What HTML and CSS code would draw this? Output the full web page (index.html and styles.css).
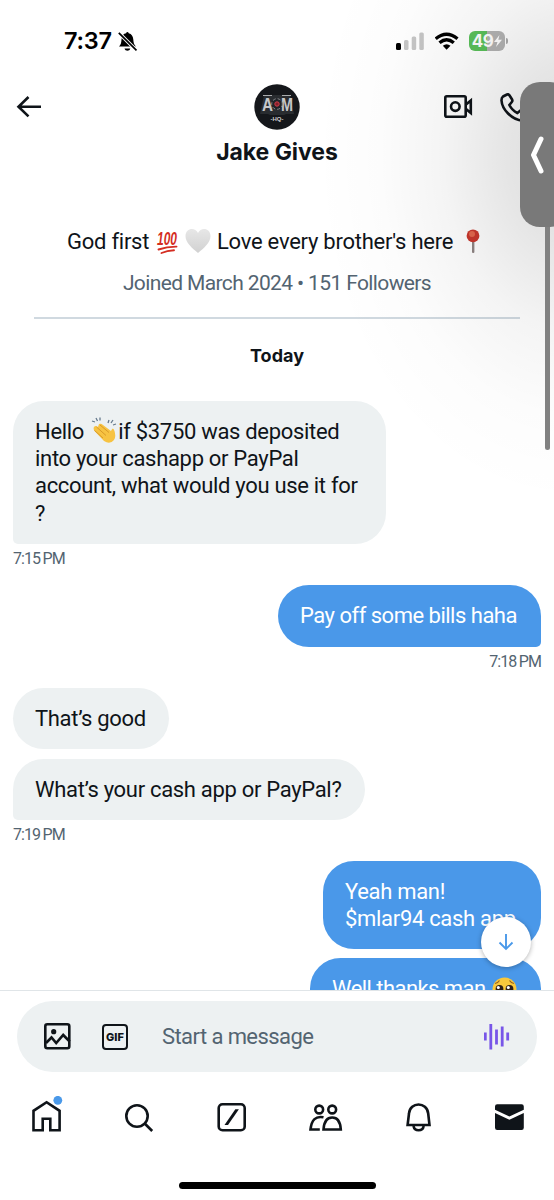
FILE: index.html
```html
<!DOCTYPE html>
<html lang="en">
<head>
<meta charset="utf-8">
<title>Jake Gives</title>
<link rel="stylesheet" href="styles.css">
</head>
<body>
<main class="phone">
  <div class="status">
    <span class="clock">7:37</span>
    <svg class="mute" width="20" height="20" viewBox="118 31 20 20"><path d="M119 46.500c2-2 2.300-4 2.500-7 .3-4 2-6 4.600-6.300.4-1.500 2.200-1.500 2.600 0 3 .6 4.300 3 4.600 6.300.2 3 .6 5 2.600 7z"/><path d="M124.500 48.500h5.800c-.8 3-5 3-5.800 0z"/><path d="M118.500 32.500 136.500 50.500" stroke="#fff" stroke-width="3.600"/><path d="M118.800 32.800 136.500 50.300" stroke="#000" stroke-width="1.700"/></svg>
    <div class="indicators">
      <svg width="29" height="19" viewBox="397 32 29 19"><rect x="397" y="43" width="5" height="7" rx="1.500"/><g fill="#c6c6c6"><rect x="405" y="40" width="4.500" height="10" rx="1.500"/><rect x="412.700" y="36.500" width="4.500" height="13.500" rx="1.500"/><rect x="420.300" y="32.500" width="4.500" height="17.500" rx="1.500"/></g></svg>
      <svg width="24" height="18" viewBox="436 32 24 18"><g fill="none" stroke="#000" stroke-width="3.300"><path d="M436.700 38.800q10.800-9.200 21.800 0"/><path d="M440.500 42.700q7.100-6 14.300 0"/></g><path d="M443.800 45.800q3.800-3 7.700 0l-3.900 3.900z"/></svg>
      <div class="battery"><span>49</span><svg width="8" height="12" viewBox="0 0 8 12"><path d="M5.500 0 0 7h3.500L2 12l6-7.200H4.300z" fill="#fff"/></svg></div>
    </div>
  </div>

  <header class="top">
    <svg class="back" width="26" height="24" viewBox="16 95 26 24"><path d="M28.500 97 18.500 106.700l10 9.700M18.500 106.700H41" fill="none" stroke="#0f1419" stroke-width="2.600"/></svg>
    <div class="identity">
      <svg class="avatar" width="46" height="46" viewBox="0 0 46 46"><circle cx="23" cy="23" r="22.700" fill="#15171b"/><path d="M6 30 10 11h26l4 19h-8l-2 1H16l-2-1z" fill="#292c30"/><text x="8" y="27" class="crest" textLength="11" lengthAdjust="spacingAndGlyphs">A</text><text x="27" y="27" class="crest" textLength="12" lengthAdjust="spacingAndGlyphs">M</text><path d="M9 11.500h9m10 0h9" stroke="#aaacae"/><circle cx="23" cy="20" r="5.300" fill="#202328" stroke="#85878a" stroke-dasharray="3 2"/><circle cx="23" cy="20" r="2.200" fill="#81202a" stroke="#d43c48"/><text x="23" y="37" class="crest-sub">-HQ-</text></svg>
      <h1 class="name">Jake Gives</h1>
    </div>
    <div class="calls">
      <svg width="30" height="24" viewBox="443 95 30 24"><g fill="none" stroke="#0f1419" stroke-width="2.600"><rect x="445.300" y="96.300" width="20.400" height="20.400" rx="1.500"/><circle cx="455.300" cy="106.600" r="4.300"/><path d="M466 104.500 470.800 100.500v12.500L466 109"/></g></svg>
      <svg width="30" height="30" viewBox="500 91 30 30"><path d="M503 94.500 507 92.500q1.500-.6 2.400.8l2.700 4.200q.7 1.300-.3 2.500l-2.400 3q2.500 5.200 8 8l3-2.500q1.200-.9 2.500-.1l4.200 2.700q1.300.9.500 2.400-2 5-5 5.200C511.500 118 502 107 501.500 98.500q-.1-2.800 1.500-4z" fill="none" stroke="#0f1419" stroke-width="2.600"/></svg>
    </div>
  </header>

  <section class="chat">
    <div class="bio">
      <span class="bio-a">God first</span>
      <svg class="hundred" width="24" height="28" viewBox="0 -2 24 28"><text x="1" y="15.500" class="hundred-text" textLength="20" lengthAdjust="spacingAndGlyphs">100</text><path d="M2.500 20.500Q11 17.500 20.500 17.600M5.500 24Q11 21.500 18 21.200" fill="none" stroke="#d42d22" stroke-width="1.900" stroke-linecap="round"/></svg>
      <svg class="heart" width="26" height="26" viewBox="0 0 26 26"><defs><linearGradient id="h" x2="0" y2="1"><stop stop-color="#e7e7e7"/><stop offset="1" stop-color="#d1d1d1"/></linearGradient></defs><path d="M13 25C7 20 .5 14.500.5 8c0-8 9.500-9.500 12.500-3C16-1.500 25.500 0 25.500 8c0 6.500-6.500 12-12.500 17z" fill="url(#h)"/></svg>
      <span class="bio-b">Love every brother's here</span>
      <svg class="pin" width="14" height="25" viewBox="0 0 14 25"><rect x="6" y="11" width="2.400" height="13" rx="1" fill="#8f8584"/><circle cx="7" cy="6.800" r="6.400" fill="#c8372d"/><circle cx="6" cy="5" r="3" fill="#e4684e"/></svg>
    </div>
    <p class="joined">Joined March 2024 • 151 Followers</p>
    <hr class="rule">
    <h2 class="day">Today</h2>

    <div class="bubble in tail b1"><span>Hello <svg class="clap" width="26" height="27" viewBox="0 0 26 27"><path d="M3 10q1.500-2 4 0l1-3q2-1 4 1l8 6q2-5 3.500 0 1.800 6-.5 9-4 5-10 1L3.500 14q-1.500-2-.5-4z" fill="#f7c342"/><path d="M3.500 13.500 12 21M5.500 10 15 18.500M9 8 18 15.500" stroke="#d99a29" fill="none"/><path d="M1 4l3 1M5 1l1.500 3M9 .5V3.500M18 3l-1 3M22 3l-2 3M25 7l-3 1" stroke="#65798c" stroke-width="1.300"/></svg>if $3750 was deposited</span><br>into your cashapp or PayPal<br>account, what would you use it for<br>?</div>
    <time class="time">7:15 PM</time>

    <div class="bubble out tail b2"><span>Pay off some bills haha</span></div>
    <time class="time right">7:18 PM</time>

    <div class="bubble in b3"><span>That’s good</span></div>
    <div class="bubble in tail b4"><span>What’s your cash app or PayPal?</span></div>
    <time class="time">7:19 PM</time>

    <div class="bubble out b5"><span>Yeah man!<br>$mlar94 cash app</span></div>
    <div class="bubble out b6"><span>Well thanks man</span><svg class="plead" width="25" height="25" viewBox="0 0 25 25"><circle cx="12.500" cy="12.500" r="12" fill="#f9c83c"/><circle cx="7.500" cy="12" r="3.900" fill="#302019"/><circle cx="17.500" cy="12" r="3.900" fill="#302019"/><circle cx="6.300" cy="10.500" r="1.500" fill="#fff"/><circle cx="16.300" cy="10.500" r="1.500" fill="#fff"/><path d="M3 6.500q3-.5 4.500-3M22 6.500q-3-.5-4.500-3M10 20q2.500-2 5 0" fill="none" stroke="#9a6420" stroke-width="1.200"/></svg></div>
    <div class="jump"><svg width="16" height="18" viewBox="0 0 16 18"><path d="M8 1v15M1.500 9.500 8 16l6.500-6.500" fill="none" stroke="#4a99e9" stroke-width="1.900"/></svg></div>
  </section>

  <footer class="dock">
    <div class="composer">
      <svg width="27" height="27" viewBox="44 1023 27 27"><g fill="none" stroke="#0f1419" stroke-width="2.600"><rect x="45.300" y="1024.300" width="24" height="24" rx="2"/><path d="m46 1043 5.500-5.500 4.700 5.500 7-8 6.500 6.500"/></g><circle cx="53.700" cy="1031.700" r="2.600" fill="#0f1419"/></svg>
      <div class="gif">GIF</div>
      <span class="placeholder">Start a message</span>
      <svg class="voice" width="26" height="26" viewBox="485 1024 26 26"><path d="M486.300 1032.500v8M491.800 1024v25.500M497.500 1029.500v15M503.200 1026.500v20M508.700 1032.500v8" stroke="#7856e8" stroke-width="2.800"/></svg>
    </div>
    <nav class="nav">
      <svg class="n-home" width="31" height="36" viewBox="32 1096 31 36"><path d="M33.500 1130.300v-19.500l13.100-8.600 13 8.600v19.500h-9.300v-11.600h-7.600v11.600z" fill="none" stroke="#0f1419" stroke-width="2.600"/><circle cx="57.800" cy="1100.300" r="4.400" fill="#4a99e9"/></svg>
      <svg class="n-search" width="29" height="29" viewBox="125 1102 29 29"><g fill="none" stroke="#0f1419" stroke-width="2.600"><circle cx="137" cy="1115" r="10.700"/><path d="m144.700 1122.500 7.500 7.500"/></g></svg>
      <svg class="n-grok" width="29" height="29" viewBox="218 1103 29 29"><rect x="219.700" y="1104.300" width="26" height="26" rx="3.800" fill="none" stroke="#0f1419" stroke-width="2.600"/><path d="m225.500 1125 10.800-15.700h3.600L229 1125z" fill="#0f1419"/></svg>
      <svg class="n-people" width="34" height="27" viewBox="309 1104 34 27"><g fill="none" stroke="#0f1419" stroke-width="2.600"><circle cx="319.200" cy="1109.500" r="3.900"/><circle cx="332.200" cy="1109.500" r="3.900"/><path d="M323.500 1117.300q-11.500-2.500-13 12.200h9.300M323.500 1129.500q.8-12 8.700-12t8.600 12z"/></g></svg>
      <svg class="n-bell" width="27" height="29" viewBox="405 1103 27 29"><g fill="none" stroke="#0f1419" stroke-width="2.600"><path d="M407.600 1125 409 1113.500c1-12 18-12 19.200 0l1.300 11.500z"/><path d="M413.500 1126c1 5.700 9.200 5.700 10.200 0"/></g></svg>
      <svg class="n-mail" width="29" height="26" viewBox="495 1104 29 26"><path d="M495 1109.800v-3.300q0-2.200 2.200-2.200h24.400q2.200 0 2.200 2.200v3.300l-14.400 6.700zM495 1113l14.400 6.700 14.400-6.700v14.700q0 2.200-2.200 2.200h-24.400q-2.200 0-2.200-2.200z" fill="#0f1419"/></svg>
    </nav>
    <div class="home-bar"></div>
  </footer>

  <div class="shade"></div>
  <div class="side-tab"><svg width="14" height="40" viewBox="0 0 14 40"><path d="M11 4 3.500 20 11 36" fill="none" stroke="#fff" stroke-width="5" stroke-linecap="round" stroke-linejoin="round"/></svg></div>
  <div class="scroll-thumb"></div>
</main>
</body>
</html>
```
FILE: styles.css
```css
* { box-sizing: border-box; }
body { margin: 0; background: #fff; color: #0f1419; font-family: Roboto, "Liberation Sans", sans-serif; }
svg { display: block; flex: none; }
h1, h2, p { margin: 0; }
.phone { position: relative; width: 554px; height: 1200px; overflow: hidden; display: flex; flex-direction: column; background: #fff; }

.status { height: 82px; padding: 0 49px 0 64px; display: flex; align-items: center; flex: none; }
.clock { font: 600 23.500px/28px Inter, sans-serif; color: #000; letter-spacing: -0.200px; width: 54px; white-space: nowrap; }
.indicators { margin-left: auto; display: flex; align-items: center; gap: 10px; }
.battery { position: relative; width: 36px; height: 20px; border-radius: 6px; background: linear-gradient(90deg, #5ac05a 50%, #b3b3b3 50%); color: #fff; font: 700 17px/20px Inter, sans-serif; display: flex; align-items: center; justify-content: center; gap: 1px; letter-spacing: -0.400px; }
.battery::after { content: ""; position: absolute; left: 37px; top: 7px; width: 2px; height: 6px; border-radius: 0 2px 2px 0; background: #aaa; }

.top { height: 108px; padding: 2px 24px 0 16px; display: grid; grid-template-columns: 100px 1fr 87px; flex: none; }
.back { margin-top: 11px; }
.identity { display: flex; flex-direction: column; align-items: center; margin-left: -4px; margin-right: 1px; }
.name { font: 700 23px/28px Inter, sans-serif; margin-top: 8px; letter-spacing: -0.050px; white-space: nowrap; }
.crest { font: 700 18px "Liberation Sans", sans-serif; fill: #c6c7c9; }
.crest-sub { font: 700 6px "Liberation Sans", sans-serif; fill: #ccc; text-anchor: middle; }
.calls { display: flex; gap: 27px; padding-top: 9px; }
.calls svg:first-child { margin-top: 2px; }

.chat { position: relative; height: 800px; overflow: hidden; display: flex; flex-direction: column; align-items: flex-start; padding: 37px 13px 0; flex: none; }
.bio { display: flex; align-items: center; height: 28px; font-size: 22px; letter-spacing: -0.250px; padding-left: 54px; white-space: nowrap; }
.bio-a { width: 89px; }
.hundred { margin-right: 5px; overflow: visible; }
.hundred-text { font: italic 700 18px "Liberation Sans", sans-serif; letter-spacing: 0; fill: #d42d22; }
.heart { margin-right: 6px; }
.bio-b { width: 249px; }
.joined { align-self: center; font-size: 21px; line-height: 28px; letter-spacing: -0.620px; color: #536471; margin-top: 14px; white-space: nowrap; }
.rule { width: 486px; height: 2px; border: 0; background: #d0d9e0; margin: 20px 0 0 21px; flex: none; }
.day { align-self: center; font: 700 18px/24px Inter, sans-serif; margin-top: 25px; }
.bubble { border-radius: 31px; padding: 17px 22px; font-size: 22px; line-height: 27.200px; letter-spacing: -0.310px; white-space: nowrap; flex: none; }
.in { background: #edf1f2; }
.out { background: #4a98e9; color: #fff; align-self: flex-end; }
.in.tail { border-bottom-left-radius: 5px; }
.out.tail { border-bottom-right-radius: 5px; }
.clap { display: inline-block; vertical-align: -5px; margin: -4px 1px 0 2px; }
.b1 { width: 373px; height: 143px; margin-top: 33px; }
.b2 { width: 263px; height: 62px; margin-top: 17px; letter-spacing: -0.500px; }
.b3 { width: 156px; height: 61px; margin-top: 17px; }
.b4 { width: 352px; height: 61px; margin-top: 10px; }
.b5 { width: 218px; height: 88px; margin-top: 17px; }
.b6 { width: 231px; height: 61px; margin-top: 9px; display: flex; justify-content: space-between; letter-spacing: -0.550px; }
.plead { margin: 2px 2px 0 0; }
.time { font-size: 16px; line-height: 20px; letter-spacing: -0.950px; word-spacing: -0.500px; color: #536471; margin-top: 5px; height: 19px; }
.right { align-self: flex-end; }
.jump { position: absolute; left: 481px; top: 727px; width: 50px; height: 50px; border-radius: 50%; background: #fff; box-shadow: 0 1px 5px rgba(0,0,0,.3); display: flex; align-items: center; justify-content: center; }

.dock { height: 210px; border-top: 1px solid #e0e5e8; padding: 10px 17px 0; background: #fff; flex: none; }
.composer { height: 71px; border-radius: 36px; background: #edf1f2; padding: 0 27px; display: flex; align-items: center; }
.gif { width: 26px; height: 26px; margin-left: 31px; border: 2.600px solid #0f1419; border-radius: 4px; font: 800 11px/22px Inter, sans-serif; display: flex; justify-content: center; }
.placeholder { font-size: 22px; letter-spacing: -0.580px; color: #536471; margin-left: 34px; white-space: nowrap; }
.voice { margin-left: auto; }
.nav { height: 60px; margin-top: 24px; padding: 0 13px 0 15px; display: flex; justify-content: space-between; align-items: flex-start; }
.n-search, .n-bell { margin-top: 7px; }
.n-search { margin-left: -1px; }
.n-grok { margin-top: 7px; margin-left: 1px; }
.n-people, .n-mail { margin-top: 8px; }
.home-bar { width: 197px; height: 7px; border-radius: 4px; background: #000; margin: 26px 0 0 162px; }

.shade { position: absolute; inset: 0; pointer-events: none; background: radial-gradient(ellipse 255px 350px at 570px 155px, rgba(0,0,0,.14) 0%, rgba(0,0,0,.1) 25%, rgba(0,0,0,.042) 50%, rgba(0,0,0,.013) 75%, transparent 100%); }
.side-tab { position: absolute; left: 520px; top: 82px; width: 50px; height: 145px; border-radius: 20px; background: #797979; padding: 53px 0 0 10px; }
.scroll-thumb { position: absolute; left: 545px; top: 227px; width: 5px; height: 223px; border-radius: 0 0 3px 3px; background: #818181; }
```
